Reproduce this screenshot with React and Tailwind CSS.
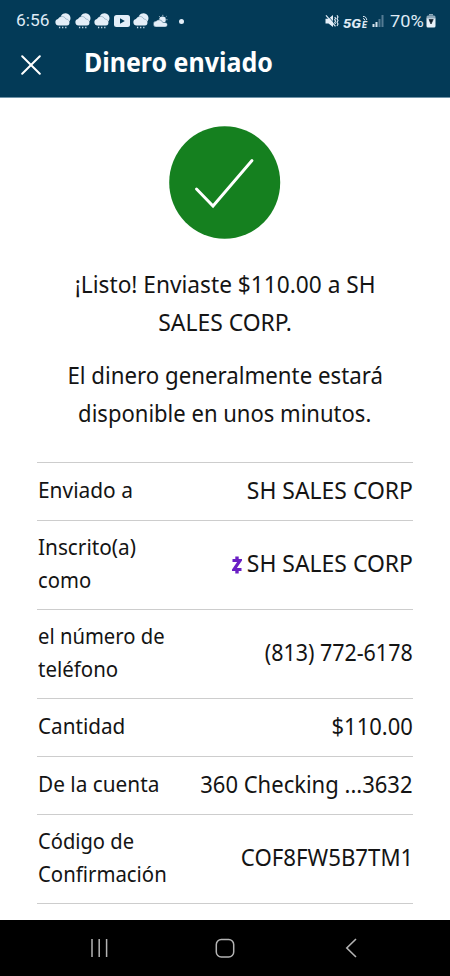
function RainCloud() {
  return (
    <svg viewBox="0 0 16 18" className="h-[18px] w-4 shrink-0" fill="none">
      <path d="M5.500 6a5 5 0 1 1 7.500 4.500z" fill="#e4eef8" />
      <path d="M3.500 13.600a3.300 3.300 0 0 1-.6-6.500A4.400 4.400 0 0 1 10.800 7.300a3.200 3.200 0 0 1 1.100 6.300z" fill="#e4eef8" />
      <path d="M5.500 4.700c2.600-.7 4.600.4 5.400 2.400 1.300 0 2.300.5 2.900 1.500" stroke="#7b9ab0" strokeWidth=".6" />
      <path d="M4.600 14.800v1.500M7.700 14.800v1.500M10.800 14.800v1.500" stroke="#c5d8e6" strokeWidth="1.300" />
    </svg>
  );
}

function StatusBar() {
  return (
    <div className="flex h-[42px] items-center pl-[15.500px] pr-[14.500px] text-[#dfeaf5]">
      <span className="w-[39.500px] origin-left scale-x-[1.05] font-[Roboto,sans-serif] text-[16.500px] leading-5">6:56</span>
      <div className="flex items-center gap-[3.500px]">
        <RainCloud />
        <RainCloud />
        <RainCloud />
        <svg viewBox="0 0 16 12" className="h-3 w-4 shrink-0">
          <rect width="16" height="12" rx="2.500" fill="#e4eef8" />
          <path d="M6 3.300v5.400L10.800 6z" fill="#033a57" />
        </svg>
        <RainCloud />
        <svg viewBox="0 0 16 14" className="h-3.5 w-4 shrink-0" fill="none">
          <circle cx="9.500" cy="5.800" r="3.300" fill="#e4eef8" />
          <path d="M9.800 .8v1.200M6 2l.8.9M13.600 2.300l-.9.9M14.500 5.700h-1.200" stroke="#a9c1d2" strokeWidth=".9" />
          <path d="M3.500 13a3 3 0 0 1-.3-6 4 4 0 0 1 6.600 1.500h2.400a2.250 2.250 0 0 1 0 4.500z" fill="#e4eef8" stroke="#033a57" strokeWidth=".4" />
        </svg>
      </div>
      <span className="ml-[10px] h-[5px] w-[5px] rounded-full bg-[#e4eef8]" />
      <div className="ml-auto flex items-center">
        <svg viewBox="0 0 14 14" className="h-3.5 w-3.5" fill="none">
          <path d="M.5 4.800h3L8 1v12L3.500 9.400h-3z" fill="#e4eef8" />
          <path d="M1.800.900L12 12" stroke="#033a57" strokeWidth=".9" />
          <path d="M1 1.300L10.500 12.300" stroke="#e4eef8" strokeWidth="1.200" />
          <path d="M9.700 3l.9 1.300-.9 1.400.9 1.400-.9 1.400.9 1.400M12 1.200l1 1.700-1 1.800 1 1.800-1 1.800 1 1.800-1 1.800" stroke="#e4eef8" strokeWidth="1.100" />
        </svg>
        <div className="ml-[4px] flex h-[17px] items-end italic">
          <span className="w-[19px] origin-left scale-x-110 font-[Roboto,sans-serif] text-[13.500px] leading-[13px] font-extrabold">5G</span>
          <div className="flex w-[6px] flex-col items-center">
            <svg viewBox="0 0 6 6" className="h-1.5 w-1.5" fill="none" stroke="#dfeaf5" strokeWidth="1">
              <path d="M1 1.500q3-.5 3.800 3.500M1 3.500q1.500 0 2 2" />
            </svg>
            <span className="font-[Roboto,sans-serif] text-[9px] leading-[9px] font-extrabold">E</span>
          </div>
        </div>
        <svg viewBox="0 0 12 12" className="ml-[4px] h-3 w-3">
          <path d="M.5 9h2v3h-2zM3.500 7h2v5h-2z" fill="#d5e3ee" />
          <path d="M6.500 4h2v8h-2zM9.500 0h2v12h-2z" fill="#547b93" />
        </svg>
        <span className="ml-[6px] w-[36px] origin-left scale-x-[1.07] font-[Roboto,sans-serif] text-[17px] leading-5">70%</span>
        <svg viewBox="0 0 10 14" className="h-3.5 w-2.5">
          <path d="M3 0h4v1.500H3z" fill="#8fa9ba" />
          <path d="M2 1.500h6a1.500 1.500 0 0 1 1.500 1.500v2h-9V3A1.500 1.500 0 0 1 2 1.500z" fill="#8fa9ba" />
          <path d="M.5 4.500h9v7.500A1.500 1.500 0 0 1 8 13.500H2A1.500 1.500 0 0 1 .5 12z" fill="#e8f1f9" />
          <path d="M3 5.500h4.200L5 10z" fill="#10202c" stroke="#10202c" strokeWidth=".7" />
        </svg>
      </div>
    </div>
  );
}

function ZelleMark() {
  return (
    <svg viewBox="0 0 10 18" className="h-[18px] w-2.5 translate-y-[2px]" fill="none" stroke="#6a1fc4">
      <path d="M5 .5v3M5 14.500v3" strokeWidth="3.400" />
      <path d="M.5 4.500h7.600L1.900 13.500h7.600" strokeWidth="3.200" />
    </svg>
  );
}

function Row({ labels, value, valueScale, mark }) {
  return (
    <div className="flex items-center justify-between border-b border-[#cdcdcd] pt-[9.500px] pb-[13.500px]">
      <div className="-mt-px pl-[0.700px] text-[22px] leading-[33px] whitespace-nowrap">
        {labels.map(([text, scale]) => (
          <div key={text} className={`w-fit origin-left ${scale}`}>{text}</div>
        ))}
      </div>
      <div className="relative flex h-[34px] items-center justify-end text-[24px] leading-[34px] whitespace-nowrap">
        {mark && <div className="absolute right-[171px]"><ZelleMark /></div>}
        <span className={`inline-block origin-right ${valueScale}`}>{value}</span>
      </div>
    </div>
  );
}

const rows = [
  { labels: [["Enviado a", "scale-x-[0.95]"]], value: "SH SALES CORP", valueScale: "scale-x-[0.955]" },
  { labels: [["Inscrito(a)", "scale-x-[0.945]"], ["como", "scale-x-[0.92]"]], value: "SH SALES CORP", valueScale: "scale-x-[0.955]", mark: true },
  { labels: [["el número de", "scale-x-[0.92]"], ["teléfono", "scale-x-[0.93]"]], value: "(813) 772-6178", valueScale: "scale-x-[0.893]" },
  { labels: [["Cantidad", "scale-x-[0.94]"]], value: "$110.00", valueScale: "scale-x-[0.915]" },
  { labels: [["De la cuenta", "scale-x-[0.945]"]], value: "360 Checking ...3632", valueScale: "scale-x-[0.917]" },
  { labels: [["Código de", "scale-x-[0.915]"], ["Confirmación", "scale-x-[0.925]"]], value: "COF8FW5B7TM1", valueScale: "scale-x-[0.926]" },
];

export default function App() {
  return (
    <div className="flex h-[976px] w-[450px] flex-col overflow-hidden bg-white font-['Noto_Sans',sans-serif] text-[#141414]">
      <header className="h-[98px] shrink-0 border-b border-[#6f93a8] bg-[#033a57]">
        <StatusBar />
        <div className="flex items-center pt-px pl-[21px]">
          <svg viewBox="0 0 20 20" className="mt-[5px] h-5 w-5" fill="none" stroke="#fff" strokeWidth="2" strokeLinecap="round">
            <path d="M1.200 1.200l17.600 17.600M18.800 1.200L1.200 18.800" />
          </svg>
          <h1 className="ml-[43px] origin-left scale-x-[0.96] text-[26px] leading-[38px] font-bold whitespace-nowrap text-white">Dinero enviado</h1>
        </div>
      </header>

      <main className="flex flex-1 flex-col px-[37px] pt-7">
        <svg viewBox="0 0 112 114" className="mx-auto h-[114px] w-28" fill="none">
          <ellipse cx="55.700" cy="56.500" rx="55.500" ry="56.300" fill="#15801f" />
          <path d="M27.500 63L44 80L83 34.500" stroke="#fff" strokeWidth="2.900" strokeLinecap="round" />
        </svg>
        <div className="mt-[25px] flex flex-col items-center text-[24px] leading-[38px] whitespace-nowrap">
          <div className="scale-x-[0.945]">¡Listo! Enviaste $110.00 a SH</div>
          <div className="scale-x-[0.955]">SALES CORP.</div>
          <div className="mt-[15px] scale-x-[0.927]">El dinero generalmente estará</div>
          <div className="scale-x-[0.918]">disponible en unos minutos.</div>
        </div>
        <div className="mt-[30px] border-t border-[#cdcdcd]">
          {rows.map((row, i) => (
            <Row key={i} {...row} />
          ))}
        </div>
      </main>

      <nav className="flex h-14 shrink-0 items-center justify-between bg-black pr-[89px] pl-[87px] text-[#b4b4b4]">
        <svg viewBox="0 0 22 20" className="h-5 w-[22px]" stroke="currentColor" strokeWidth="1.500">
          <path d="M5 1v18M12.200 1v18M19.600 1v18" />
        </svg>
        <svg viewBox="0 0 20 20" className="h-5 w-5" fill="none" stroke="currentColor" strokeWidth="1.500">
          <rect x="1.300" y="1.500" width="17.400" height="17.400" rx="5" />
        </svg>
        <svg viewBox="0 0 20 20" className="h-5 w-5" fill="none" stroke="currentColor" strokeWidth="1.600">
          <path d="M15 1L5.800 10l9.200 9" />
        </svg>
      </nav>
    </div>
  );
}
